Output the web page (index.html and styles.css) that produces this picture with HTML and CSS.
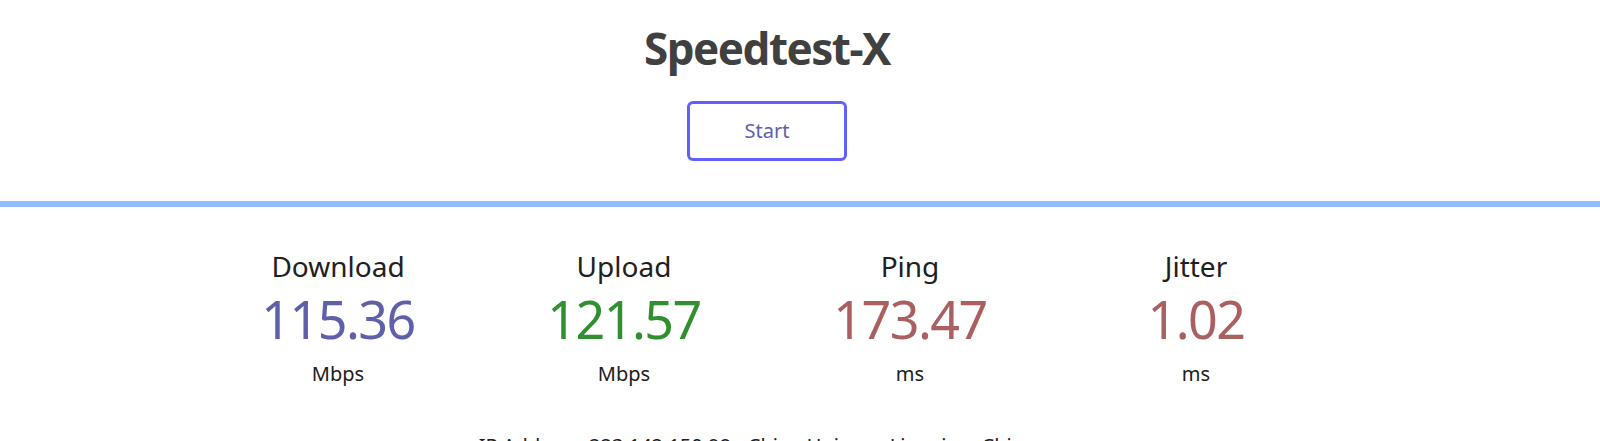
FILE: index.html
```
<!DOCTYPE html>
<html lang="en">
<head>
<meta charset="utf-8">
<title>Speedtest-X</title>
<link rel="stylesheet" href="styles.css">
</head>
<body>
<header class="top">
  <h1 class="title">Speedtest-X</h1>
  <div class="start-btn">Start</div>
</header>
<div class="progress"></div>
<main class="results">
  <div class="meters">
    <div class="meter">
      <div class="meter-name">Download</div>
      <div class="meter-value dl">115.36</div>
      <div class="meter-unit">Mbps</div>
    </div>
    <div class="meter">
      <div class="meter-name">Upload</div>
      <div class="meter-value ul">121.57</div>
      <div class="meter-unit">Mbps</div>
    </div>
    <div class="meter">
      <div class="meter-name">Ping</div>
      <div class="meter-value ping">173.47</div>
      <div class="meter-unit">ms</div>
    </div>
    <div class="meter">
      <div class="meter-name">Jitter</div>
      <div class="meter-value ping">1.02</div>
      <div class="meter-unit">ms</div>
    </div>
  </div>
  <div class="ip-info">IP Address: 223.142.150.98 - China Unicom, Liaoning, China</div>
</main>
</body>
</html>
```
FILE: styles.css
```
html, body {
  margin: 0;
  padding: 0;
  background: #ffffff;
}
body {
  font-family: "Noto Sans", "Open Sans", sans-serif;
  font-size: 20px;
  color: #202020;
  text-align: center;
  overflow: hidden;
}
.top {
  display: flex;
  flex-direction: column;
  align-items: center;
  padding-right: 66px;
}
.title {
  margin: 22px 0 0 0;
  font-size: 44px;
  line-height: 52px;
  font-weight: 700;
  letter-spacing: -1.5px;
  color: #404040;
}
.start-btn {
  margin-top: 27px;
  box-sizing: border-box;
  width: 160px;
  height: 60px;
  border: 3px solid #6060ff;
  border-radius: 6px;
  line-height: 54px;
  font-size: 20px;
  color: #6060aa;
}
.progress {
  margin-top: 40px;
  height: 6px;
  background: #93bdff;
}
.results {
  padding-right: 66px;
}
.meters {
  display: flex;
  justify-content: center;
  gap: 6px;
  margin-top: 41px;
}
.meter {
  width: 280px;
  height: 140px;
  display: flex;
  flex-direction: column;
  align-items: center;
}
.meter-name {
  font-size: 28px;
  line-height: 36px;
}
.meter-value {
  margin-top: 5px;
  font-size: 52px;
  line-height: 60px;
  letter-spacing: -1.5px;
}
.meter-value.dl { color: #6060aa; }
.meter-value.ul { color: #309030; }
.meter-value.ping { color: #aa6060; }
.meter-unit {
  margin-top: 13px;
  font-size: 20px;
  line-height: 24px;
}
.ip-info {
  margin-top: 46px;
  padding-right: 20px;
  font-size: 20px;
  line-height: 24px;
}
```
